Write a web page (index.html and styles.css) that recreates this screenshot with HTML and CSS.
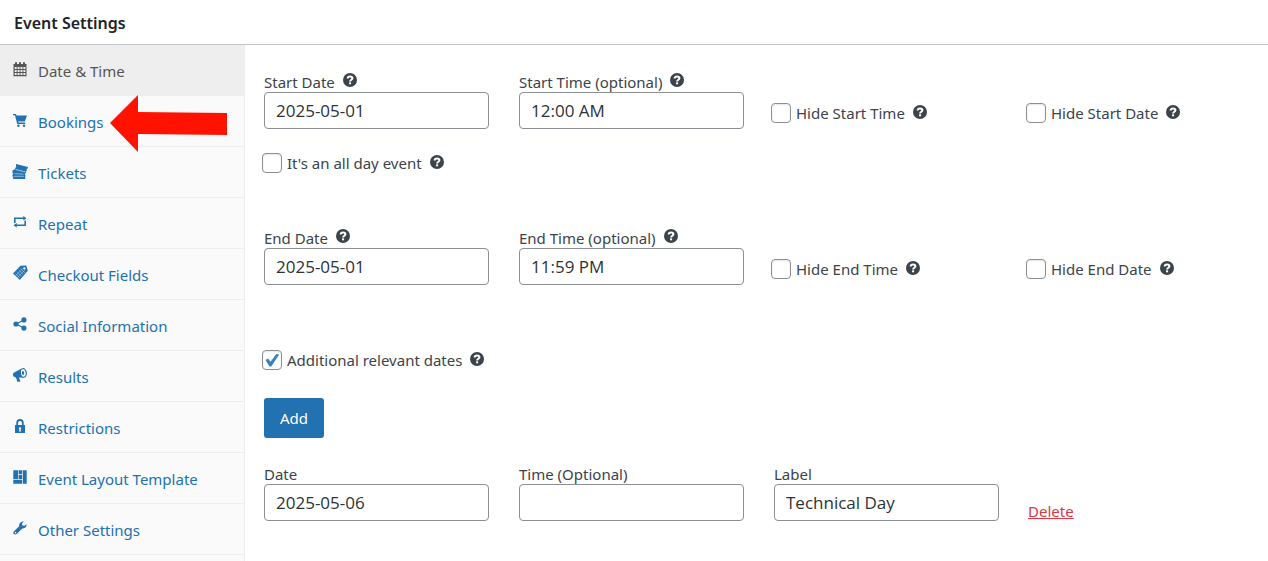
FILE: index.html
```
<!DOCTYPE html>
<html lang="en">
<head>
  <meta charset="UTF-8" />
  <meta name="viewport" content="width=device-width, initial-scale=1.0" />
  <title>Event Settings</title>
  <link rel="stylesheet" href="styles.css">
</head>
<body>
<svg class="sprite" aria-hidden="true">
  <symbol id="help" viewBox="0 0 14 14">
    <circle cx="7" cy="7" r="7" fill="currentColor" />
    <path d="M4.700 5.500C4.700 4.100 5.700 3.500 7 3.500S9.400 4.100 9.400 5.300C9.400 6.800 7.100 6.700 7.100 8.500" fill="none" stroke="#fff" stroke-width="2" />
    <rect x="6.100" y="9.300" width="2" height="2" fill="#fff" />
  </symbol>
</svg>
<div class="panel">
  <h1 class="panel__title">Event Settings</h1>
  <div class="panel__body">
    <nav class="tabs">
      <a class="tabs__item tabs__item--active" href="#date">
        <svg class="icon" viewBox="0 0 16 16"><path fill="currentColor" fill-rule="evenodd" d="M1.500 3H3V1.300h2V3h2V1.300h2V3h2V1.300h2V3h1.500v12.300h-13zM2.700 6v2h2V6zm2.900 0v2h2V6zm2.900 0v2h2V6zm2.900 0v2h2V6zM2.700 9v2h2V9zm2.900 0v2h2V9zm2.900 0v2h2V9zm2.900 0v2h2V9zM2.700 12v2h2v-2zm2.900 0v2h2v-2zm2.900 0v2h2v-2zm2.900 0v2h2v-2z" /></svg>
        Date &amp; Time
      </a>
      <a class="tabs__item" href="#bookings">
        <svg class="icon" viewBox="0 0 16 16"><path fill="currentColor" d="M1 2h3l.5 1.500H15L12.800 9.500H6l.4 1.100h6.800v1.300H5.200L3 3.300H1z" /><circle cx="6.400" cy="13.800" r="1.200" fill="currentColor" /><circle cx="12" cy="13.800" r="1.200" fill="currentColor" /></svg>
        Bookings
        <svg class="pointer" viewBox="0 0 117 57"><path fill="#ff1200" d="M0 28 28 0V17L117 18V40L28 39V57Z" /></svg>
      </a>
      <a class="tabs__item" href="#tickets">
        <svg class="icon" viewBox="0 0 16 16"><g fill="currentColor"><path d="M4 1l12 3-.5 1.800-.9.300.2 1.200-.6 1.400L3 6l.5-1.500.9-.5-.4-1z" /><path d="M.5 7.500 3 6l11.200 2.700-.7 1.800-.8.700.7.900-.2 1.400H.3l.2-1.700.9-.8-.9-1z" /><path d="M1.500 12h11.700v4H1z" /></g><path d="M3.500 6.600l9.500 2.300M2.500 10.600l9 .6M2 13.300h10" stroke="#fafafa" stroke-width=".5" /></svg>
        Tickets
      </a>
      <a class="tabs__item" href="#repeat">
        <svg class="icon" viewBox="0 0 16 16"><path d="M2.800 9V4.300H12M13.200 6.500v4.800H4" fill="none" stroke="currentColor" stroke-width="1.600" /><path fill="currentColor" d="M11.300 2v4.600L14.500 4.300zM4.700 9v4.600L1.500 11.300z" /></svg>
        Repeat
      </a>
      <a class="tabs__item" href="#checkout">
        <svg class="icon" viewBox="0 0 16 16"><path fill="currentColor" fill-rule="evenodd" d="M1 8.500 8.500.8l5.800-.3 1.500 5.300L7.800 15zM12.400 2.200a1.200 1.200 0 1 0 .1 2.400 1.200 1.200 0 0 0-.1-2.400z" /><path d="M3.300 8.400 7.900 13M5 6.700l4.600 4.600M6.700 5l4.600 4.600M8.400 3.300 13 7.900M3.600 10.800l7.200-7.200M5.600 12.400l7.400-7.400" stroke="#fafafa" stroke-width=".4" /></svg>
        Checkout Fields
      </a>
      <a class="tabs__item" href="#social">
        <svg class="icon" viewBox="0 0 16 16"><path d="M12 4 4 8l8 4" fill="none" stroke="currentColor" stroke-width="1.300" /><g fill="currentColor"><circle cx="11.900" cy="3.900" r="2.600" /><circle cx="4" cy="8" r="2.600" /><circle cx="11.900" cy="12.100" r="2.600" /></g></svg>
        Social Information
      </a>
      <a class="tabs__item" href="#results">
        <svg class="icon" viewBox="0 0 16 16"><path fill="currentColor" d="M1 8C.8 6.600 1.500 5.800 2.500 5.300L9.800 1.600C7.500 4.500 8 8.500 10.500 10.600L7 10.400 8.500 14.700H5.300L4 10.500C2.500 10.500 1.200 9.500 1 8z" /><ellipse cx="11.300" cy="6" rx="3" ry="4.300" fill="none" stroke="currentColor" stroke-width="1.200" transform="rotate(-8 11.300 6)" /><ellipse cx="11" cy="6" rx="1.100" ry="1.900" fill="currentColor" /></svg>
        Results
      </a>
      <a class="tabs__item" href="#restrictions">
        <svg class="icon" viewBox="0 0 16 16"><path d="M5.200 8V4.800a2.800 2.800 0 0 1 5.600 0V8" fill="none" stroke="currentColor" stroke-width="1.800" /><path fill="currentColor" fill-rule="evenodd" d="M3 7h10v8H3zM8 9.200a1.200 1.200 0 0 0-.6 2.200L7 13.500h2l-.4-2.100A1.200 1.200 0 0 0 8 9.200z" /></svg>
        Restrictions
      </a>
      <a class="tabs__item" href="#layout">
        <svg class="icon" viewBox="0 0 16 16"><path fill="currentColor" d="M1.300 1.300H6v8.700H1.300zM6.600 1.300h3.600v3.800H6.600zM6.600 5.800h3.600V10H6.600zM10.900 1.300h3.800v13.400h-3.800zM1.300 10.700h8.900v4H1.300z" /></svg>
        Event Layout Template
      </a>
      <a class="tabs__item" href="#other">
        <svg class="icon" viewBox="0 0 16 16"><path fill="currentColor" fill-rule="evenodd" d="M14.600 4.300c.3 2.500-1.700 4.600-4.400 4.100L5 13.800c-1 1-2.300 1-3.200.3-.8-.9-.7-2 .2-2.900L7.200 6.300C6.700 3.500 8.800 1.200 11.900 1.500L10 3.300l.3 2.200 2.200.3zM3.400 11.800a.8.8 0 1 0 .1 1.600.8.8 0 0 0-.1-1.600z" /></svg>
        Other Settings
      </a>
    </nav>
    <form class="fields">
      <div class="row">
        <div class="field">
          <label class="field__label" for="start-date">Start Date <svg class="help"><use href="#help" /></svg></label>
          <input class="field__input" type="text" id="start-date" value="2025-05-01" />
        </div>
        <div class="field">
          <label class="field__label" for="start-time">Start Time (optional) <svg class="help"><use href="#help" /></svg></label>
          <input class="field__input" type="text" id="start-time" value="12:00 AM" />
        </div>
        <label class="check"><input class="check__box" type="checkbox" />Hide Start Time <svg class="help"><use href="#help" /></svg></label>
        <label class="check"><input class="check__box" type="checkbox" />Hide Start Date <svg class="help"><use href="#help" /></svg></label>
      </div>
      <label class="check check--all-day"><input class="check__box" type="checkbox" />It's an all day event <svg class="help"><use href="#help" /></svg></label>
      <div class="row">
        <div class="field">
          <label class="field__label" for="end-date">End Date <svg class="help"><use href="#help" /></svg></label>
          <input class="field__input" type="text" id="end-date" value="2025-05-01" />
        </div>
        <div class="field">
          <label class="field__label" for="end-time">End Time (optional) <svg class="help"><use href="#help" /></svg></label>
          <input class="field__input" type="text" id="end-time" value="11:59 PM" />
        </div>
        <label class="check"><input class="check__box" type="checkbox" />Hide End Time <svg class="help"><use href="#help" /></svg></label>
        <label class="check"><input class="check__box" type="checkbox" />Hide End Date <svg class="help"><use href="#help" /></svg></label>
      </div>
      <label class="check check--additional"><input class="check__box" type="checkbox" checked />Additional relevant dates <svg class="help"><use href="#help" /></svg></label>
      <button class="add" type="button">Add</button>
      <div class="row">
        <div class="field">
          <label class="field__label" for="extra-date">Date</label>
          <input class="field__input" type="text" id="extra-date" value="2025-05-06" />
        </div>
        <div class="field">
          <label class="field__label" for="extra-time">Time (Optional)</label>
          <input class="field__input" type="text" id="extra-time" />
        </div>
        <div class="field">
          <label class="field__label" for="extra-label">Label</label>
          <input class="field__input" type="text" id="extra-label" value="Technical Day" />
        </div>
        <a class="delete" href="#delete">Delete</a>
      </div>
    </form>
  </div>
</div>
</body>
</html>
```
FILE: styles.css
```
* {
  box-sizing: border-box;
}
body {
  margin: 0;
  background: #fff;
  color: #3c434a;
  font-family: "Segoe UI", "Noto Sans", "Open Sans", sans-serif;
  font-size: 15px;
  line-height: 20px;
  overflow: hidden;
}
.sprite {
  display: none;
}
.panel {
  display: flex;
  flex-direction: column;
  min-height: 100vh;
}
.panel__title {
  margin: 0;
  padding: 13px 14px 11px;
  border-bottom: 1px solid #c3c4c7;
  color: #1d2327;
  font-size: 16px;
  font-weight: 600;
}
.panel__body {
  display: flex;
  flex: 1;
}
.tabs {
  flex: 0 0 245px;
  background: #fafafa;
  border-right: 1px solid #eee;
}
.tabs__item {
  position: relative;
  display: flex;
  align-items: center;
  gap: 10px;
  height: 51px;
  padding: 2px 12px 0;
  border-bottom: 1px solid #eee;
  color: #2271b1;
  text-decoration: none;
}
.tabs__item--active {
  margin-right: -1px;
  background: #eee;
  color: #555;
}
.icon {
  width: 16px;
  height: 16px;
  margin-bottom: 4px;
}
.pointer {
  position: absolute;
  top: -1px;
  left: 110px;
  z-index: 1;
  width: 117px;
  height: 57px;
}
.fields {
  flex: 1;
  padding: 27px 14px 40px 19px;
}
.row {
  display: grid;
  grid-template-columns: repeat(4, 1fr);
  gap: 30px;
  align-items: end;
}
.field__label {
  display: flex;
  align-items: center;
  gap: 8px;
}
.field__input {
  display: block;
  width: 100%;
  height: 37px;
  padding: 0 11px;
  border: 1px solid #8c8f94;
  border-radius: 4px;
  background: #fff;
  color: #2c3338;
  font-family: "Segoe UI", "Open Sans", sans-serif;
  font-size: 17px;
}
.help {
  flex: none;
  width: 14px;
  height: 14px;
  margin-bottom: 4px;
}
.check {
  display: flex;
  align-items: center;
  gap: 8px;
  margin: 0 0 6px -3px;
}
.check .help {
  margin-bottom: 2px;
}
.check--all-day {
  margin: 24px 0 55px -2px;
}
.check--additional {
  margin: 65px 0 28px -2px;
}
.check__box {
  appearance: none;
  width: 20px;
  height: 20px;
  margin: 0 -3px 0 0;
  border: 1px solid #8c8f94;
  border-radius: 4px;
  background: #fff;
  box-shadow: inset 0 1px 2px rgba(0, 0, 0, 0.1);
}
.check__box:checked::before {
  content: "";
  display: block;
  width: 18px;
  height: 18px;
  background: #3582c4;
  clip-path: polygon(14% 50%, 28% 42%, 42% 60%, 74% 16%, 90% 20%, 46% 86%, 36% 86%);
}
.add {
  display: block;
  height: 40px;
  margin-bottom: 26px;
  padding: 0 16px;
  border: none;
  border-radius: 3px;
  background: #2271b1;
  color: #fff;
  font-family: inherit;
  font-size: 15px;
}
.delete {
  margin-left: -1px;
  color: #dc3545;
  justify-self: start;
}
```
